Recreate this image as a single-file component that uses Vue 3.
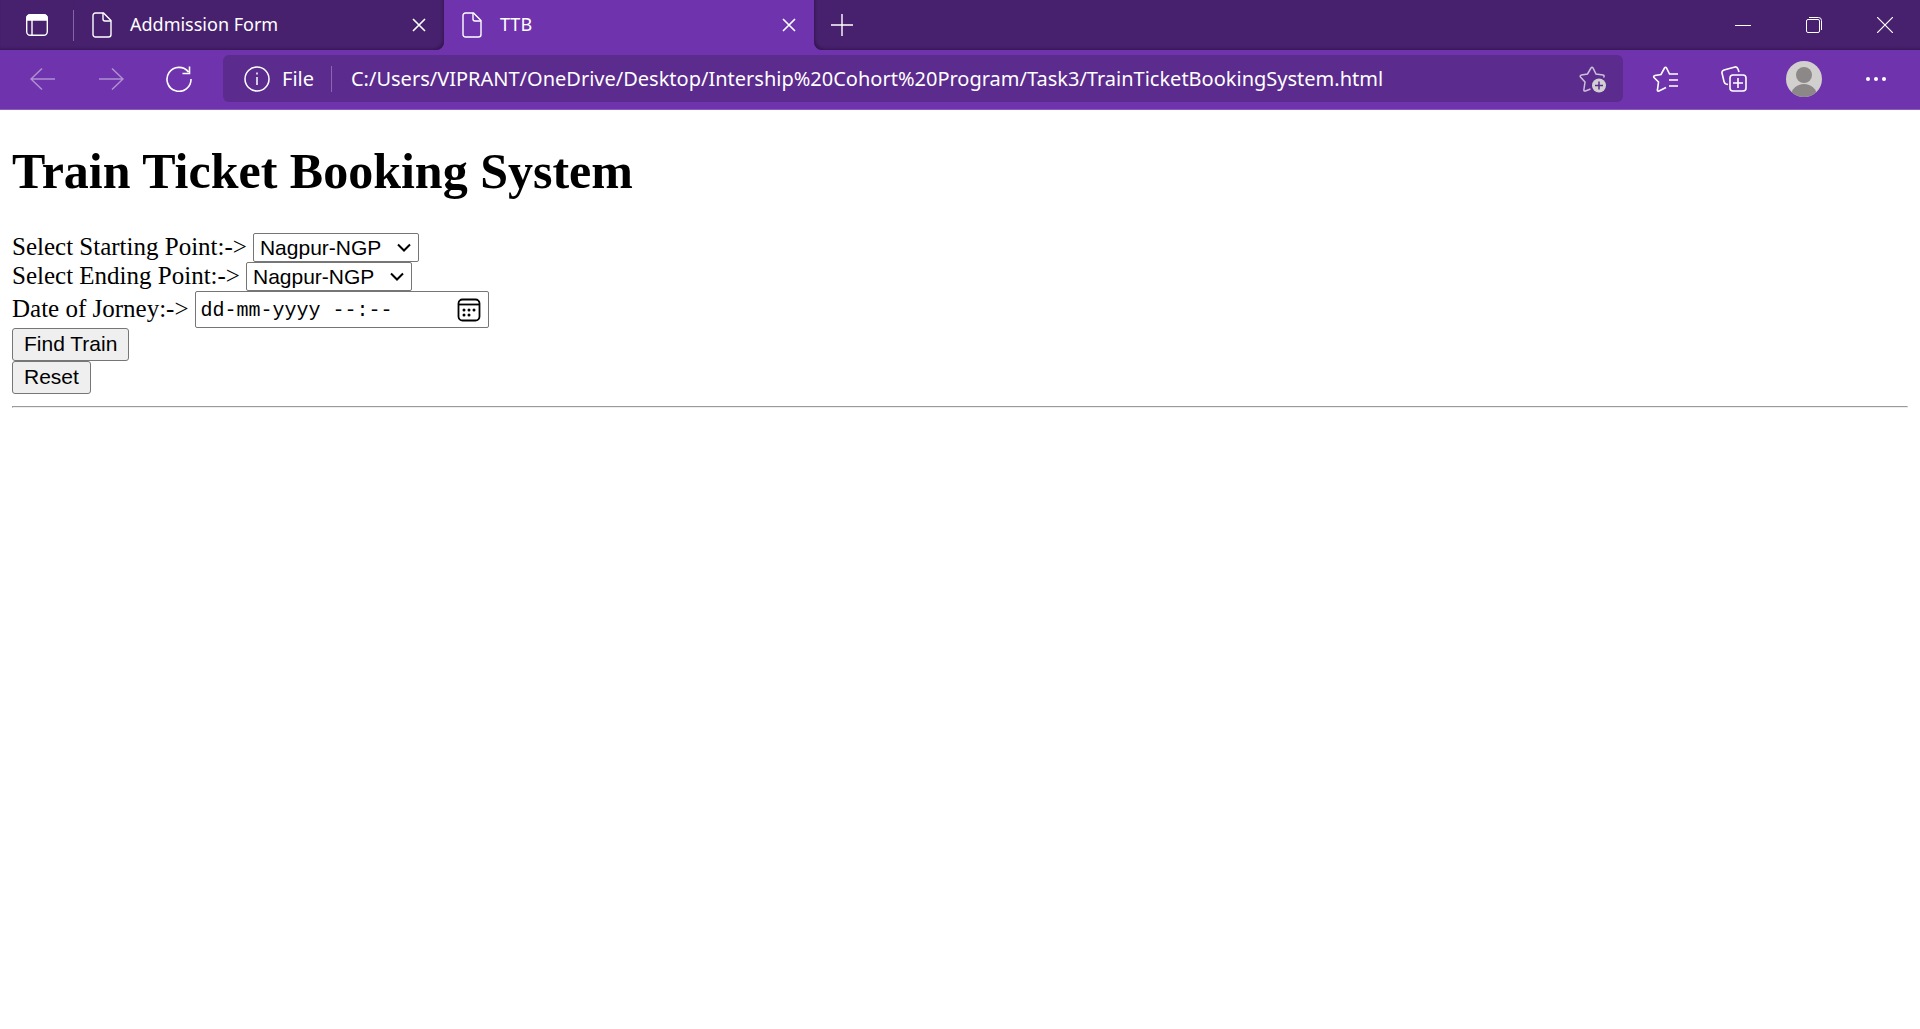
<script setup>
import { ref } from 'vue'

const stations = ['Nagpur-NGP', 'Mumbai-CSMT', 'Pune-PUNE']
const start = ref('Nagpur-NGP')
const end = ref('Nagpur-NGP')
const journey = ref('dd-mm-yyyy --:--')
const address = ref('C:/Users/VIPRANT/OneDrive/Desktop/Intership%20Cohort%20Program/Task3/TrainTicketBookingSystem.html')

function reset() {
  start.value = 'Nagpur-NGP'
  end.value = 'Nagpur-NGP'
  journey.value = 'dd-mm-yyyy --:--'
}
</script>

<template>
  <div class="browser">
    <header class="tabs">
      <button class="icon tab-menu" aria-label="Tab actions">
        <svg width="24" height="24" viewBox="0 0 24 24" fill="none" stroke="#fff" stroke-width="1.4">
          <rect x="1.7" y="1.7" width="20.6" height="20.6" rx="3.5" />
          <path d="M2 7V5a3 3 0 0 1 3-3h14a3 3 0 0 1 3 3v2z" fill="#fff" />
          <path d="M7 7v15" />
        </svg>
      </button>
      <div class="tab">
        <svg class="page-icon" width="20" height="26" viewBox="0 0 20 26" fill="none" stroke="#fff" stroke-width="1.4">
          <path d="M3.5 1H11.5L19 8.5V22.5A2.5 2.5 0 0 1 16.5 25H3.5A2.5 2.5 0 0 1 1 22.5V3.5A2.5 2.5 0 0 1 3.5 1Z" />
          <path d="M11 1V7A2 2 0 0 0 13 9H19" />
        </svg>
        <span class="title">Addmission Form</span>
        <button class="icon close" aria-label="Close tab">
          <svg width="14" height="14" viewBox="0 0 14 14" stroke="#fff" stroke-width="1.6"><path d="M1 1l12 12M13 1L1 13" /></svg>
        </button>
      </div>
      <div class="tab active">
        <svg class="page-icon" width="20" height="26" viewBox="0 0 20 26" fill="none" stroke="#fff" stroke-width="1.4">
          <path d="M3.5 1H11.5L19 8.5V22.5A2.5 2.5 0 0 1 16.5 25H3.5A2.5 2.5 0 0 1 1 22.5V3.5A2.5 2.5 0 0 1 3.5 1Z" />
          <path d="M11 1V7A2 2 0 0 0 13 9H19" />
        </svg>
        <span class="title">TTB</span>
        <button class="icon close" aria-label="Close tab">
          <svg width="14" height="14" viewBox="0 0 14 14" stroke="#fff" stroke-width="1.6"><path d="M1 1l12 12M13 1L1 13" /></svg>
        </button>
      </div>
      <div class="strip-rest">
        <button class="icon new-tab" aria-label="New tab">
          <svg width="22" height="22" viewBox="0 0 22 22" stroke="#fff" stroke-width="1.4"><path d="M0 11h22M11 0v22" /></svg>
        </button>
        <div class="window-buttons">
          <button class="icon" aria-label="Minimise">
            <svg width="16" height="16" viewBox="0 0 16 16" stroke="#fff"><path d="M0 8.5h16" /></svg>
          </button>
          <button class="icon" aria-label="Restore">
            <svg width="16" height="16" viewBox="0 0 16 16" fill="none" stroke="#fff">
              <rect x=".5" y="2.5" width="13" height="13" rx="1.5" />
              <path d="M3 .5h9.5a3 3 0 0 1 3 3V13" />
            </svg>
          </button>
          <button class="icon" aria-label="Close">
            <svg width="16" height="16" viewBox="0 0 16 16" stroke="#fff" stroke-width="1.2"><path d="M0 0l16 16M16 0L0 16" /></svg>
          </button>
        </div>
      </div>
    </header>

    <nav class="toolbar">
      <div class="navigation">
        <button class="icon faded" aria-label="Back">
          <svg width="26" height="22" viewBox="0 0 26 22" fill="none" stroke="#fff" stroke-width="1.5"><path d="M25 11H1M12 .5L1 11l11 10.5" /></svg>
        </button>
        <button class="icon faded" aria-label="Forward">
          <svg width="26" height="22" viewBox="0 0 26 22" fill="none" stroke="#fff" stroke-width="1.5"><path d="M1 11h24M14 .5L25 11L14 21.5" /></svg>
        </button>
        <button class="icon" aria-label="Refresh">
          <svg width="26" height="26" viewBox="0 0 26 26" fill="none" stroke="#fff" stroke-width="1.6">
            <path d="M22.5 6A12 12 0 1 0 25 13M23.5 .5V7.5H16.5" />
          </svg>
        </button>
      </div>
      <div class="address">
        <svg width="26" height="26" viewBox="0 0 26 26" fill="none" stroke="#fff" stroke-width="1.5">
          <circle cx="13" cy="13" r="12" />
          <path d="M13 11v8M13 6.5v2" />
        </svg>
        <label class="scheme" for="url">File</label>
        <input id="url" v-model="address" class="url" type="text" spellcheck="false">
        <button class="icon favourite" aria-label="Add to favourites">
          <svg width="28" height="28" viewBox="0 0 28 28" fill="none" stroke="#ccbfda" stroke-width="1.5">
            <path d="M11.5 24L6.5 26Q4.6 26.5 4.9 24.5L6 17L1.5 12Q.5 10.5 2.5 10L8.5 9L12 3Q13 1.5 14 3L17 9L24 10Q26 10.5 24.5 12.5" />
            <circle cx="20" cy="20.5" r="7" fill="#d2cfd3" stroke="none" />
            <path d="M20 16.5v8M16 20.5h8" stroke="#5b2b8d" />
          </svg>
        </button>
      </div>
      <div class="actions">
        <button class="icon" aria-label="Favourites">
          <svg width="28" height="26" viewBox="0 0 28 26" fill="none" stroke="#fff" stroke-width="1.6">
            <path d="M14 21.5L7 25Q5 25.5 5.5 23.5L6.5 16L2 11.5Q1 10 3 9.5L9 8.5L12.5 2Q13.5 .5 14.5 2L17.5 8H26M17 14H26M17 20H26" />
          </svg>
        </button>
        <button class="icon" aria-label="Collections">
          <svg width="26" height="26" viewBox="0 0 26 26" fill="none" stroke="#fff" stroke-width="1.6">
            <path d="M7 18.5L5 18Q3.5 17.5 3 15.5L1 7Q.5 5 3 4L14 1Q16 .5 17 3L18 6" />
            <rect x="9" y="9" width="16" height="16" rx="3" />
            <path d="M17 12v10M12 17h10" />
          </svg>
        </button>
        <button class="icon wide" aria-label="Profile">
          <svg width="36" height="36" viewBox="0 0 36 36">
            <clipPath id="face"><circle cx="18" cy="18" r="18" /></clipPath>
            <g clip-path="url(#face)">
              <path d="M0 0h36v36H0z" fill="#d2d0ce" />
              <circle cx="18" cy="14" r="8" fill="#8b8887" />
              <ellipse cx="18" cy="35" rx="13" ry="12" fill="#8b8887" />
            </g>
          </svg>
        </button>
        <button class="icon wide" aria-label="Settings and more">
          <svg width="22" height="6" viewBox="0 0 22 6" fill="#fff"><circle cx="3" cy="3" r="2" /><circle cx="11" cy="3" r="2" /><circle cx="19" cy="3" r="2" /></svg>
        </button>
      </div>
    </nav>

    <main class="page">
      <h1>Train Ticket Booking System</h1>
      <form @submit.prevent>
        <div class="row">
          <label for="start">Select Starting Point:-&gt;</label>
          <span class="select">
            <select id="start" v-model="start"><option v-for="s in stations" :key="s">{{ s }}</option></select>
            <svg width="14" height="10" viewBox="0 0 14 10" fill="none" stroke="#000" stroke-width="2"><path d="M1 1.5l6 6l6-6" /></svg>
          </span>
        </div>
        <div class="row">
          <label for="end">Select Ending Point:-&gt;</label>
          <span class="select">
            <select id="end" v-model="end"><option v-for="s in stations" :key="s">{{ s }}</option></select>
            <svg width="14" height="10" viewBox="0 0 14 10" fill="none" stroke="#000" stroke-width="2"><path d="M1 1.5l6 6l6-6" /></svg>
          </span>
        </div>
        <div class="row">
          <label for="journey">Date of Jorney:-&gt;</label>
          <span class="date">
            <input id="journey" v-model="journey" type="text">
            <button type="button" class="icon" aria-label="Show calendar">
              <svg width="24" height="24" viewBox="0 0 24 24" fill="none" stroke="#000" stroke-width="1.8">
                <rect x="1.5" y="1.5" width="21" height="21" rx="4" />
                <path d="M1.5 6.5h21" />
                <g fill="#000" stroke="none">
                  <circle cx="7" cy="12" r="1.5" /><circle cx="12" cy="12" r="1.5" /><circle cx="17" cy="12" r="1.5" />
                  <circle cx="7" cy="17" r="1.5" /><circle cx="12" cy="17" r="1.5" />
                </g>
              </svg>
            </button>
          </span>
        </div>
        <div class="row"><button class="push" type="submit">Find Train</button></div>
        <div class="row"><button class="push" type="button" @click="reset">Reset</button></div>
      </form>
      <hr>
    </main>
  </div>
</template>

<style>
body {
  margin: 0;
  background: #fff;
}
</style>

<style scoped>
* {
  box-sizing: border-box;
}

.browser {
  font-family: "Noto Sans", sans-serif;
  color: #fff;
}

.icon {
  display: flex;
  align-items: center;
  justify-content: center;
  flex: none;
  padding: 0;
  border: 0;
  background: none;
}

.icon svg,
.page-icon {
  display: block;
  flex: none;
}

/* Tab strip */
.tabs {
  display: flex;
  height: 50px;
  background: #6f34ad;
}

.tab-menu {
  width: 74px;
  background: #47216d;
  box-shadow: inset 0 -3px 3px -2px #351653;
}

.tab {
  display: flex;
  align-items: center;
  flex: 0 1 370px;
  padding: 0 18px;
  background: #47216d;
  box-shadow: inset -3px -3px 3px -2px #351653;
  border-radius: 0 0 8px 0;
  position: relative;
}

.tab:not(.active)::before {
  content: "";
  position: absolute;
  left: -1px;
  top: 10px;
  width: 1px;
  height: 31px;
  background: #8465a4;
}

.tab.active {
  background: #6f34ad;
  box-shadow: none;
  border-radius: 8px 8px 0 0;
}

.title {
  flex: 1;
  margin-left: 18px;
  padding-bottom: 2px;
  font-size: 18px;
  line-height: 24px;
  white-space: nowrap;
}

.close {
  width: 14px;
}

.strip-rest {
  display: flex;
  justify-content: space-between;
  flex: 1;
  background: #47216d;
  border-radius: 0 0 0 8px;
  box-shadow: inset 3px -3px 3px -2px #351653;
}

.new-tab {
  width: 56px;
}

.window-buttons {
  display: flex;
}

.window-buttons .icon {
  width: 71px;
}

/* Toolbar */
.toolbar {
  display: flex;
  align-items: center;
  height: 60px;
  padding: 0 8px 2px 9px;
  background: #6f34ad;
  border-bottom: 1px solid #8b5cbd;
}

.navigation {
  display: flex;
  margin-right: 10px;
}

.navigation .icon {
  width: 68px;
  height: 40px;
}

.faded {
  opacity: 0.45;
}

.address {
  display: flex;
  align-items: center;
  flex: 1;
  height: 47px;
  padding: 0 16px 0 21px;
  background: #5b2b8d;
  border-radius: 6px;
}

.scheme {
  margin-left: 12px;
  padding-right: 17px;
  border-right: 1px solid #8b68ae;
  font-size: 20px;
  line-height: 26px;
}

.url {
  flex: 1;
  min-width: 0;
  padding: 0 0 0 19px;
  border: 0;
  background: none;
  color: #fff;
  font: 20px/26px "Noto Sans", sans-serif;
}

.actions {
  display: flex;
  margin-left: 9px;
}

.actions .icon {
  width: 68px;
  height: 40px;
}

.actions .wide {
  width: 72px;
}

/* Page */
.page {
  padding: 34px 12px 0;
  color: #000;
  font: 25px/26px "Liberation Serif", serif;
}

h1 {
  margin: 0 0 34px;
  font-size: 50px;
  line-height: 55px;
}

.row {
  display: flex;
  align-items: center;
  gap: 6px;
}

.row label {
  padding-bottom: 2px;
}

.select {
  position: relative;
  display: flex;
  height: 29px;
}

.select svg {
  position: absolute;
  right: 8px;
  top: 10px;
  pointer-events: none;
}

select {
  appearance: none;
  width: 166px;
  height: 29px;
  padding: 0 6px;
  border: 1px solid #767676;
  border-radius: 2px;
  background: #fff;
  color: #000;
  font: 21px/24px "Liberation Sans", sans-serif;
}

.date {
  display: flex;
  align-items: center;
  width: 294px;
  height: 37px;
  padding: 0 7px 0 5px;
  border: 1px solid #767676;
  border-radius: 2px;
}

.date input {
  flex: 1;
  min-width: 0;
  padding: 2px 0 0;
  border: 0;
  color: #000;
  font: 20px/24px "Liberation Mono", monospace;
}

.push {
  height: 33px;
  padding: 0 11px 2px;
  border: 1px solid #767676;
  border-radius: 3px;
  background: #efefef;
  color: #000;
  font: 21px/24px "Liberation Sans", sans-serif;
}

hr {
  margin: 12px 0;
  border: 1px solid;
  border-color: #9a9a9a #eee #eee #9a9a9a;
}
</style>
